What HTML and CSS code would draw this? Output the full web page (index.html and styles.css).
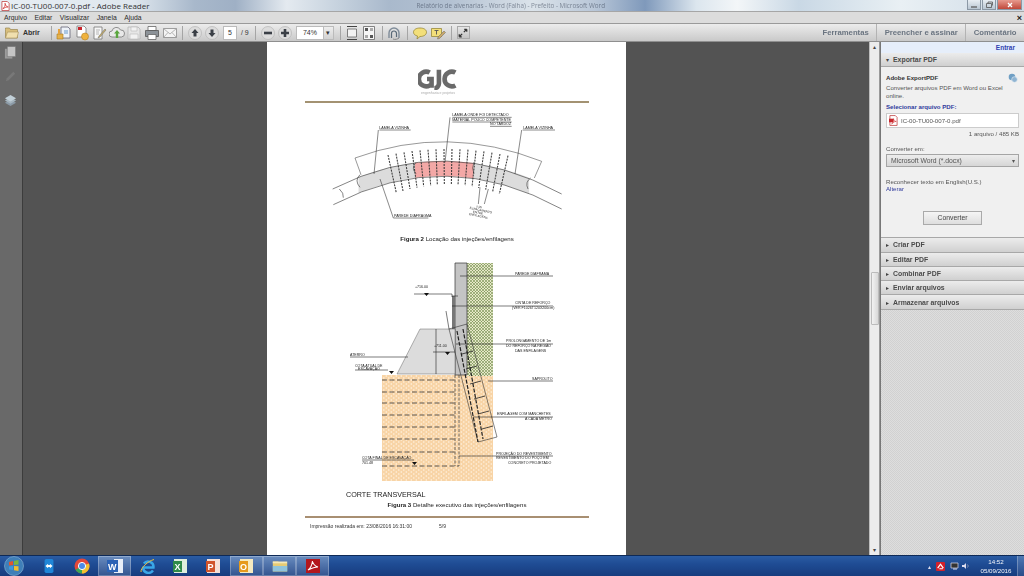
FILE: index.html
```html
<!DOCTYPE html>
<html lang="pt-BR">
<head>
<meta charset="utf-8">
<title>IC-00-TU00-007-0.pdf - Adobe Reader</title>
<link rel="stylesheet" href="styles.css">
</head>
<body>
<div class="app">
  <header class="titlebar">
    <svg class="ti" viewBox="0 0 10 10"><path d="M1 0h6l2 2v8H1z" fill="#fff" stroke="#b33" stroke-width=".8"/><path d="M2 8c2-1 3-4 2.500-6 .5 3 2 4 3.500 4-2 0-4 1-6 2z" fill="none" stroke="#c22" stroke-width=".8"/></svg>
    <span class="title-text">IC-00-TU00-007-0.pdf - Adobe Reader</span>
    <span class="ghost-title">Relatório de alvenarias - Word (Falha) - Prefeito - Microsoft Word</span>
    <div class="winctl">
      <span class="wbtn"><svg viewBox="0 0 10 8"><path d="M2 6h6" stroke="#555" stroke-width="1.200"/></svg></span>
      <span class="wbtn"><svg viewBox="0 0 10 8"><path d="M2.500 2.500h5v4h-5zM4 2.500V1h4.500v3.500" fill="none" stroke="#555" stroke-width=".8"/></svg></span>
      <span class="wbtn wclose"><svg viewBox="0 0 10 8"><path d="M3 2l4 4M7 2l-4 4" stroke="#fff" stroke-width="1.300"/></svg></span>
    </div>
  </header>
  <nav class="menubar">
    <span>Arquivo</span><span>Editar</span><span>Visualizar</span><span>Janela</span><span>Ajuda</span>
    <b class="menu-close">×</b>
  </nav>
  <div class="toolbar">
    <svg class="folder" viewBox="0 0 14 12"><path d="M.5 2.500V1h4l1 1.500h7v8.500H.5z" fill="#d9bf7c" stroke="#9a8650" stroke-width=".7"/><path d="M.5 11l2-6h11l-1.500 6z" fill="#f0dfae" stroke="#a8925c" stroke-width=".6"/></svg>
    <span class="open-label">Abrir</span>
    <i class="sep s11"></i>
    <div class="icons g-wide">
      <svg class="ic" viewBox="0 0 16 16"><path d="M5 2h7l2 2v9H5z" fill="#eef2f8" stroke="#667" stroke-width=".8"/><path d="M8 6h4M8 8h4" stroke="#69c"/><path d="M1 9h6v5H1z" fill="#e6b24c" stroke="#a87a20" stroke-width=".6"/><path d="M3 4v5" stroke="#e6a23c" stroke-width="2"/></svg>
      <svg class="ic" viewBox="0 0 16 16"><path d="M3 1h7l2 2v9H3z" fill="#fff" stroke="#777" stroke-width=".8"/><path d="M4 2h4v3H4z" fill="#c8262c"/><circle cx="11" cy="11.500" r="3.500" fill="#efb23e" stroke="#b58222" stroke-width=".6"/></svg>
      <svg class="ic" viewBox="0 0 16 16"><path d="M3 2h8v12H3z" fill="#f7f7f7" stroke="#777" stroke-width=".8"/><path d="M5 5h4M5 7h3M5 9h3" stroke="#999" stroke-width=".7"/><path d="M8 11l6-7 1 1-6 7-2 1z" fill="#c9b16b" stroke="#666" stroke-width=".5"/></svg>
      <svg class="ic" viewBox="0 0 16 16"><path d="M3 12a3 3 0 0 1 0-6 4.500 4.500 0 0 1 8.500-1 3.500 3.500 0 0 1 1 7z" fill="#e9e9e9" stroke="#777" stroke-width=".8"/><path d="M8 5l3 3.500H9.200V13H6.800V8.500H5z" fill="#5aa63e"/></svg>
      <svg class="ic" viewBox="0 0 16 16"><path d="M2 2h10l2 2v10H2z" fill="#e6e6e6" stroke="#b5b5b5" stroke-width=".8"/><path d="M5 2h6v4H5zM4 9h8v5H4z" fill="#f2f2f2" stroke="#bbb" stroke-width=".6"/></svg>
      <svg class="ic" viewBox="0 0 16 16"><path d="M4 1.500h8v4H4z" fill="#fff" stroke="#666" stroke-width=".8"/><path d="M1.500 5.500h13v6h-13z" fill="#8c9298" stroke="#555" stroke-width=".8"/><path d="M4 9.500h8v5H4z" fill="#fff" stroke="#666" stroke-width=".8"/></svg>
      <svg class="ic" viewBox="0 0 16 16"><path d="M1.500 3.500h13v9h-13z" fill="#f4f4f4" stroke="#8a8a8a" stroke-width=".8"/><path d="M1.500 3.500L8 9l6.500-5.500M1.500 12.500L6 7.500M14.500 12.500L10 7.500" fill="none" stroke="#9a9a9a" stroke-width=".7"/></svg>
    </div>
    <i class="sep s4"></i>
    <div class="icons g-tight ml4">
      <svg class="ic" viewBox="0 0 16 16"><circle cx="8" cy="8" r="6.500" fill="#dcdcdc" stroke="#b5b5b5" stroke-width=".7"/><path d="M8 4L11.500 8H9.500v3.500h-3V8H4.500z" fill="#3a3f46"/></svg>
      <svg class="ic" viewBox="0 0 16 16"><circle cx="8" cy="8" r="6.500" fill="#dcdcdc" stroke="#b5b5b5" stroke-width=".7"/><path d="M8 12L4.500 8h2V4.500h3V8h2z" fill="#3a3f46"/></svg>
    </div>
    <span class="pagebox">5</span>
    <span class="pagecount">/ 9</span>
    <i class="sep s4b"></i>
    <div class="icons g-tight ml4">
      <svg class="ic" viewBox="0 0 16 16"><circle cx="8" cy="8" r="6.500" fill="#dcdcdc" stroke="#b5b5b5" stroke-width=".7"/><path d="M4 6.700h8v2.600H4z" fill="#3a3f46"/></svg>
      <svg class="ic" viewBox="0 0 16 16"><circle cx="8" cy="8" r="6.500" fill="#dcdcdc" stroke="#b5b5b5" stroke-width=".7"/><path d="M6.700 4h2.600v2.700H12v2.600H9.300V12H6.700V9.300H4V6.700h2.700z" fill="#3a3f46"/></svg>
    </div>
    <div class="zoombox"><span class="zoomval">74%</span><span class="zoomdrop">▾</span></div>
    <i class="sep s6"></i>
    <div class="icons g-tight ml3">
      <svg class="ic" viewBox="0 0 16 16"><path d="M3 1.500h10M3 14.500h10" stroke="#444" stroke-width="1.200"/><path d="M3.500 4h9v8h-9z" fill="#f2f2f2" stroke="#666" stroke-width=".8"/></svg>
      <svg class="ic" viewBox="0 0 16 16"><path d="M2.500 1.500h11v13h-11z" fill="#f5f5f5" stroke="#666" stroke-width=".8"/><path d="M4 3h3v3H4zM9 10h3v3H9z" fill="#555"/><path d="M9 3h3v3H9zM4 10h3v3H4z" fill="#aaa"/></svg>
    </div>
    <i class="sep s5"></i>
    <div class="icons ml3">
      <svg class="ic" viewBox="0 0 16 16"><path d="M3 13V8a5 5 0 0 1 10 0v5" fill="none" stroke="#7f8c99" stroke-width="1.400"/><path d="M5.500 13V8.500a2.500 2.500 0 0 1 5 0V12" fill="none" stroke="#5a6a78" stroke-width="1.200"/><path d="M7 14c2 1 5 0 6-1" fill="none" stroke="#888"/></svg>
    </div>
    <i class="sep s5"></i>
    <div class="icons g-2 ml4">
      <svg class="ic" viewBox="0 0 16 16"><path d="M8 3c4 0 6.500 1.800 6.500 4.200S12 11.500 8 11.500l-3 2.500.5-3C3 10.500 1.500 9 1.500 7.200 1.500 4.800 4 3 8 3z" fill="#f3df7a" stroke="#98893a" stroke-width=".8"/></svg>
      <svg class="ic" viewBox="0 0 16 16"><path d="M1.500 3.500h10v8h-10z" fill="#f3df7a" stroke="#98893a" stroke-width=".8"/><path d="M4.500 5.500h4M6.500 5.500v4" stroke="#555" stroke-width=".9"/><path d="M8 12l6-6 1.500 1.500-6 6-2 .5z" fill="#c9a86b" stroke="#666" stroke-width=".5"/></svg>
    </div>
    <i class="sep s5"></i>
    <span class="expand"><svg viewBox="0 0 12 12"><path d="M7 5l3.500-3.500M10.500 1.500v3M10.500 1.500h-3M5 7l-3.500 3.500M1.500 10.500v-3M1.500 10.500h3" fill="none" stroke="#333" stroke-width="1.500"/></svg></span>
    <div class="tabs">
      <span class="tab">Ferramentas</span>
      <span class="tab">Preencher e assinar</span>
      <span class="tab">Comentário</span>
    </div>
  </div>

  <main class="main">
    <aside class="rail">
      <svg class="rail-ic" viewBox="0 0 14 14"><path d="M1 3h8v10.500H1z" fill="#9c9c9c"/><path d="M3.500 .5h9v11h-9z" fill="#c4c4c4" stroke="#6a6a6a" stroke-width=".6"/></svg>
      <svg class="rail-ic faint" viewBox="0 0 14 14"><path d="M2 12l1-3 7-7 2 2-7 7z" fill="#7f7f7f"/></svg>
      <svg class="rail-ic" viewBox="0 0 14 14"><path d="M7 6l6 3.500L7 13 1 9.500z" fill="#8b9aa6"/><path d="M7 3.500L13 7 7 10.500 1 7z" fill="#a6b5bf"/><path d="M7 1l6 3.500L7 8 1 4.500z" fill="#c2d0d8"/></svg>
    </aside>
    <section class="canvas">
      <article class="page">
        <div class="logo">
          <svg class="logo-mark" viewBox="0 0 42 24"><path d="M12 5a8 8 0 1 0 0 14h2v-7H9" fill="none" stroke="#6a6a6a" stroke-width="5"/><path d="M22 2v15a5 5 0 0 1-5 5" fill="none" stroke="#6a6a6a" stroke-width="5"/><path d="M40 5a8 8 0 1 0 0 14" fill="none" stroke="#6a6a6a" stroke-width="5"/></svg>
          <span class="logo-sub">engenharia e projetos</span>
        </div>
        <hr class="rule">
        <svg class="fig1" viewBox="0 145 900 345" aria-label="Figura 2">
          <defs>
            <clipPath id="cg"><rect x="175" y="250" width="170" height="200"/><rect x="520" y="250" width="168" height="200"/></clipPath>
            <clipPath id="cr"><rect x="345" y="250" width="175" height="200"/></clipPath>
          </defs>
          <path d="M99 408Q440 232 785 422" fill="none" stroke="#dcdcdc" stroke-width="45" clip-path="url(#cg)"/>
          <path d="M99 408Q440 232 785 422" fill="none" stroke="#f3a8a6" stroke-width="45" clip-path="url(#cr)"/>
          <g fill="none" stroke="#333" stroke-width="1.800">
            <path d="M98 385Q440 210 785 400M100 432Q440 255 785 445"/>
            <path d="M118 385q14 12 12 26M180 342q-18 18 0 38M348 305q-16 18 0 34M522 304q-8 18 0 36M692 352q-18 12-8 33"/>
            <path d="M165 292Q440 190 725 302M165 292l18 50M725 302l-22 50" stroke-width="1.500"/>
          </g>
          <g stroke="#3a3a3a" stroke-width="3.200" stroke-dasharray="6 3">
            <path d="M264 283L289 397M288 279L309 391M312 275L330 385M336 271L351 381M360 269L371 377M384 267L392 375M408 266L412 373M432 265L433 372M456 265L454 372M480 266L474 373M504 267L495 375M528 270L516 378M552 272L536 382M576 276L557 387M600 280L578 393M624 285L598 400"/>
          </g>
          <g fill="none" stroke="#222" stroke-width="1.600">
            <path d="M238 208H332M235 208L222 340M668 208H765M665 208L645 340M457 170H635M457 184H635M570 197H635M450 170L435 305M240 355L280 472H385M540 380L535 430M565 385L553 430"/>
          </g>
          <g class="fig-t1">
            <text x="238" y="204">LAMELA VIZINHA</text>
            <text x="670" y="204">LAMELA VIZINHA</text>
            <text x="457" y="167">LAMELA ONDE FOI DETECTADO</text>
            <text x="457" y="181">MATERIAL POUCO COMPETENTE</text>
            <text x="570" y="194">NO TARDOZ</text>
            <text x="282" y="469">PAREDE DIAFRAGMA</text>
            <g transform="rotate(12 530 440)" class="fig-small">
              <text x="528" y="440">2.00</text>
              <text x="510" y="449">ESPAÇAMENTO</text>
              <text x="522" y="458">ENTRE</text>
              <text x="512" y="467">ENFILAGENS</text>
            </g>
          </g>
        </svg>
        <p class="caption cap2"><b>Figura 2</b> Locação das injeções/enfilagens</p>
        <svg class="fig2" viewBox="340 262 230 228" aria-label="Figura 3">
          <defs>
            <pattern id="green" width="3" height="3" patternUnits="userSpaceOnUse"><rect width="3" height="3" fill="#e6e8c8"/><path d="M0 0l3 3M3 0L0 3" stroke="#6f8a4a" stroke-width=".6"/></pattern>
            <pattern id="orange" width="5" height="4" patternUnits="userSpaceOnUse"><rect width="5" height="4" fill="#f8d4a6"/><circle cx="1.300" cy="1" r=".8" fill="#fff3e2"/><circle cx="3.800" cy="3" r=".8" fill="#fff3e2"/></pattern>
          </defs>
          <rect x="382" y="376" width="111" height="106" fill="url(#orange)"/>
          <rect x="467" y="264" width="26" height="113" fill="url(#green)"/>
          <path d="M455 264h12v112h-12z" fill="#c4c4c4" stroke="#333" stroke-width=".7"/>
          <path d="M452 297h3v48h-3z" fill="#777"/>
          <path d="M420 330h35v45h-58z" fill="#dcdcdc" stroke="#444" stroke-width=".4"/>
          <path d="M449 330l18-5 30 113-19 5z" fill="none" stroke="#333" stroke-width=".6"/>
          <path d="M457 332l21 111M463 330l20 110" stroke="#222" stroke-width="1.200" stroke-dasharray="4 1.500"/>
          <path d="M462 355l11-3M466 370l11-3M470 385l11-3M474 400l11-3M478 415l11-3M482 430l11-3" stroke="#222" stroke-width=".8"/>
          <path d="M382 381H455M382 393H455M382 404H455M382 416H455M382 428H455M382 440H455M382 453H455M382 467H459" stroke="#333" stroke-width=".8" stroke-dasharray="5 2.500"/>
          <path d="M455 376V467M459 376V467" stroke="#333" stroke-width=".7" stroke-dasharray="3 1.500"/>
          <g fill="none" stroke="#222" stroke-width=".6">
            <path d="M460 277H553M452 307H553M456 345H553M488 382H553M473 418H553M459 457H553"/>
            <path d="M414 295H452V298M433 353H455M436 330V375M362 461H414M355 371H388M350 358H408"/>
            <path d="M452 297l6 0M449 330l-3-18"/>
          </g>
          <path d="M424 294l5 0-2.500 3zM445 353l5 0-2.500 3zM389 372l5 0-2.500 3zM412 463l5 0-2.500 3z" fill="#111"/>
          <g class="fig-t2">
            <text x="515" y="276">PAREDE DIAFRAMA</text>
            <text x="515" y="305">CINTA DE REFORÇO</text>
            <text x="512" y="310">(VER F1026T120X200cm)</text>
            <text x="506" y="343">PROLONGAMENTO DE 1m</text>
            <text x="506" y="348">DO REFORÇO NA REGIÃO</text>
            <text x="515" y="353">DAS ENFILAGENS</text>
            <text x="532" y="381">SAPROLITO</text>
            <text x="497" y="416">ENFILAGEM COM MANCHETES</text>
            <text x="525" y="421">A CADA METRO</text>
            <text x="496" y="456">PROJEÇÃO DO REVESTIMENTO</text>
            <text x="496" y="460">REVESTIMENTO DO POÇO EM</text>
            <text x="508" y="465">CONCRETO PROJETADO</text>
            <text x="362" y="460">COTA FINAL DE ESCAVAÇÃO</text>
            <text x="362" y="465">701.48</text>
            <text x="355" y="368">COTA ATUAL DE</text>
            <text x="358" y="371">ESCAVAÇÃO</text>
            <text x="350" y="357">ATERRO</text>
            <text x="415" y="289">+716.00</text>
            <text x="434" y="348">+711.00</text>
          </g>
        </svg>
        <p class="section-title">CORTE TRANSVERSAL</p>
        <p class="caption cap3"><b>Figura 3</b> Detalhe executivo das injeções/enfilagens</p>
        <hr class="rule rule-b">
        <div class="footer-line"><span>Impressão realizada em: 23/08/2016 16:31:00</span><span class="pg">5/9</span></div>
      </article>
    </section>
    <div class="scrollbar">
      <span class="sb-arrow">▴</span>
      <span class="sb-thumb"></span>
      <span class="sb-arrow sb-down">▾</span>
    </div>
    <aside class="panel">
      <div class="login">Entrar</div>
      <div class="acc open">▾<span>Exportar PDF</span></div>
      <div class="export">
        <div class="ex-head"><b>Adobe ExportPDF</b>
          <svg class="cloud" viewBox="0 0 10 10"><circle cx="4" cy="4" r="3.300" fill="#6f9fc4"/><circle cx="6.500" cy="6.500" r="2.800" fill="#8fb4d2" stroke="#e8eef3" stroke-width=".6"/></svg>
        </div>
        <p class="ex-desc">Converter arquivos PDF em Word ou Excel online.</p>
        <p class="ex-link">Selecionar arquivo PDF:</p>
        <div class="filebox">
          <svg class="fi" viewBox="0 0 10 12"><path d="M1 .5h6l2 2v9H1z" fill="#fff" stroke="#b33" stroke-width=".8"/><path d="M0 4h5v4H0z" fill="#c7272d"/><path d="M3 10c1-2 2-4 2-6 .5 2 1 3 3 3-2 0-3 1-5 3z" fill="none" stroke="#c22" stroke-width=".6"/></svg>
          <span>IC-00-TU00-007-0.pdf</span>
        </div>
        <p class="ex-size">1 arquivo / 485 KB</p>
        <p class="ex-label">Converter em:</p>
        <div class="selectbox"><span>Microsoft Word (*.docx)</span><i>▾</i></div>
        <p class="ex-ocr">Reconhecer texto em English(U.S.)</p>
        <p class="ex-alt">Alterar</p>
        <span class="convert">Converter</span>
      </div>
      <div class="acc">▸<span>Criar PDF</span></div>
      <div class="acc">▸<span>Editar PDF</span></div>
      <div class="acc">▸<span>Combinar PDF</span></div>
      <div class="acc">▸<span>Enviar arquivos</span></div>
      <div class="acc">▸<span>Armazenar arquivos</span></div>
      <div class="panel-fill"></div>
    </aside>
  </main>

  <footer class="taskbar">
    <span class="orb"><svg viewBox="0 0 20 20"><circle cx="10" cy="10" r="9.500" fill="#3f7fb8" stroke="#8fb8d8" stroke-width=".6"/><path d="M5 6l4-1v4l-4 .5z" fill="#e2552c"/><path d="M10 5l4.500-1v4.500L10 9z" fill="#7db63c"/><path d="M5 10.500l4-.5v4l-4-.6z" fill="#3c9ade"/><path d="M10 10l4.500.2V15l-4.500-.8z" fill="#efbd2e"/></svg></span>
    <span class="tk"><svg viewBox="0 0 16 18"><rect x="3" y="1" width="10" height="16" rx="2" fill="#1f86d8"/><path d="M4 9l3-2.500V8h2V6.500L12 9l-3 2.500V10H7v1.500z" fill="#fff"/></svg></span>
    <span class="tk"><svg viewBox="0 0 16 16"><circle cx="8" cy="8" r="7.500" fill="#e2483a"/><path d="M8 8L1.500 11.800A7.500 7.500 0 0 0 8 15.500z" fill="#3aa655"/><path d="M8 8v7.500a7.500 7.500 0 0 0 7-10z" fill="#f2c230"/><circle cx="8" cy="8" r="3.600" fill="#4b8be8" stroke="#fff" stroke-width="1"/></svg></span>
    <span class="tk act"><svg viewBox="0 0 18 16"><path d="M8 1h9v14H8z" fill="#e8eef8"/><path d="M1 2h11v12H1z" fill="#2b62b5"/><text x="2" y="12" class="tk-letter">W</text></svg></span>
    <span class="tk"><svg viewBox="0 0 16 16"><path d="M2.500 9.500h11A5.500 5.500 0 0 0 3.800 5.500M3 10a5.500 5.500 0 0 0 10 2.500" fill="none" stroke="#39a7e8" stroke-width="2.400"/><path d="M1 14c-.5-4 7-11 13-12.500" fill="none" stroke="#f0c23c" stroke-width="1"/></svg></span>
    <span class="tk"><svg viewBox="0 0 18 16"><path d="M2 1h13v14H2z" fill="#dfeedd"/><path d="M1 3h9v11H1z" fill="#2f8a4a"/><text x="2.500" y="12" class="tk-letter">X</text></svg></span>
    <span class="tk"><svg viewBox="0 0 18 16"><path d="M2 1h13v14H2z" fill="#f5e0d8"/><path d="M1 3h9v11H1z" fill="#d0542c"/><text x="2.500" y="12" class="tk-letter">P</text></svg></span>
    <span class="tk act"><svg viewBox="0 0 18 16"><path d="M2 1h13v14H2z" fill="#f6eac0"/><path d="M1 3h9v11H1z" fill="#e69a1c"/><text x="2" y="12" class="tk-letter">O</text></svg></span>
    <span class="tk act"><svg viewBox="0 0 20 16"><path d="M2 3h6l1 1.500h9V14H2z" fill="#e6cb74"/><path d="M2 8h16v6H2z" fill="#8fc4dc"/><path d="M2 3h16v2H2z" fill="#f4e9b8"/></svg></span>
    <span class="tk act"><svg viewBox="0 0 16 16"><path d="M1 1h14v14H1z" fill="#b3161c"/><path d="M3 12c3-2 4-5 4.500-9 .5 3 2 5 5.500 6-3 0-6 1-10 3z" fill="none" stroke="#fff" stroke-width="1.100"/></svg></span>
    <div class="tray">
      <i class="tray-up">▴</i>
      <span class="tray-red"><svg viewBox="0 0 8 8"><path d="M1.500 5.500L4 2l2.500 3.500M3 6h3" fill="none" stroke="#fff" stroke-width="1.100"/></svg></span>
      <svg class="tray-ic" viewBox="0 0 10 8"><path d="M1 1h7v5H1z" fill="#333" stroke="#dde" stroke-width=".7"/><path d="M3 7h4" stroke="#dde"/></svg>
      <svg class="tray-ic" viewBox="0 0 10 8"><path d="M1 3h2l2-2v6L3 5H1z" fill="#dde"/><path d="M6.500 2.500q1.500 1.500 0 3" fill="none" stroke="#aab" stroke-width=".7"/></svg>
      <div class="clock"><span>14:52</span><span>05/09/2016</span></div>
      <span class="desk"></span>
    </div>
  </footer>
</div>
</body>
</html>
```

FILE: styles.css
```css
* { box-sizing: border-box; }
html, body { margin: 0; padding: 0; }
body { width: 1024px; height: 576px; overflow: hidden; font-family: "Liberation Sans", sans-serif; background: #535353; }
p { margin: 0; }
svg { display: block; flex: none; }
.app { width: 1024px; height: 576px; display: flex; flex-direction: column; overflow: hidden; filter: blur(.3px); }

.titlebar { height: 11px; display: flex; align-items: center; padding-left: 1px; font-size: 8px; color: #333;
  background: linear-gradient(90deg, #e6edf3 0, #dfe7ee 13%, #a8b8cb 19%, #9fb0c5 23%, #e4eaf0 28%, #c6d2de 33%, #a9b9cc 38%, #b3c1d2 44%, #dbe3ea 52%, #b9c7d8 58%, #7f99bb 63%, #dce6ee 68%, #f3f6f8 72%, #c9d8e5 78%, #e9f0f4 88%, #cfdbe6 100%); }
.ti { width: 9px; height: 10px; }
.title-text { margin-left: 1px; font-family: "Open Sans", sans-serif; white-space: nowrap; }
.ghost-title { margin-left: 267px; font-family: "Open Sans", sans-serif; white-space: nowrap; font-size: 6.300px; color: rgba(40, 50, 70, .5); filter: blur(.6px); }
.winctl { margin-left: auto; margin-right: 2px; display: flex; height: 11px; gap: 1px; }
.wbtn { width: 14px; height: 10px; display: flex; align-items: center; justify-content: center; background: linear-gradient(#e8eef3, #b9c6d2); border: 1px solid #8b98a5; border-top: 0; }
.wbtn svg { width: 10px; height: 8px; }
.wclose { width: 25px; background: linear-gradient(#e79a8e, #c0483a); }

.menubar { height: 12px; background: #dcdcdc; border-top: 1px solid #a6a6a6; display: flex; align-items: center; padding-left: 4px; gap: 7.500px; font-size: 6.800px; color: #2c2c2c; }
.menu-close { margin-left: auto; margin-right: 2px; font-size: 9px; color: #222; line-height: 8px; }

.toolbar { height: 19px; display: flex; align-items: center; padding-left: 5px; background: linear-gradient(#ececec, #c9c9c9); border-top: 1px solid #9a9a9a; border-bottom: 1px solid #8f8f8f; }
.folder { width: 14px; height: 12px; }
.open-label { margin-left: 4px; width: 18px; font-size: 7px; font-weight: 700; color: #333; }
.sep { width: 1px; height: 14px; background: #a5a5a5; flex: none; }
.s11 { margin-left: 10px; margin-right: 4px; }
.s4 { margin-left: 4.400px; }
.s4b { margin-left: 4px; }
.s6 { margin-left: 6px; }
.s5 { margin-left: 5px; }
.icons { display: flex; }
.g-wide { gap: 1.600px; }
.g-tight { gap: 1px; }
.g-2 { gap: 2px; }
.ml4 { margin-left: 4px; }
.ml3 { margin-left: 3px; }
.ic { width: 16px; height: 16px; }
.pagebox { margin-left: 3px; width: 14px; height: 14px; background: #fff; border: 1px solid #bbb; font-size: 7px; text-align: center; line-height: 12px; color: #333; }
.pagecount { margin-left: 4px; width: 10px; font-size: 7px; color: #333; white-space: nowrap; }
.zoombox { margin-left: 3px; width: 38px; height: 14px; display: flex; background: #fff; border: 1px solid #bbb; font-size: 7px; line-height: 12px; color: #333; }
.zoomval { width: 26px; text-align: center; }
.zoomdrop { flex: 1; text-align: center; background: linear-gradient(#eee, #d2d2d2); border-left: 1px solid #bbb; font-size: 7px; }
.expand { margin-left: 5px; width: 13px; height: 13px; display: flex; align-items: center; justify-content: center; background: linear-gradient(#e6e6e6, #c4c4c4); border: 1px solid #aaa; }
.expand svg { width: 10px; height: 10px; }
.tabs { margin-left: auto; display: flex; align-self: stretch; }
.tab { display: flex; align-items: center; padding: 0 7.500px; border-left: 1px solid #b3b3b3; font-size: 7.700px; font-weight: 700; color: #6a7480; white-space: nowrap; }
.tab:first-child { border-left: 0; }

.main { flex: 1; display: flex; min-height: 0; }
.rail { width: 23px; background: #696969; border-right: 1px solid #3c3c3c; display: flex; flex-direction: column; align-items: center; gap: 11px; padding: 4px 2px 0 0; }
.rail-ic { width: 13px; height: 13px; }
.faint { opacity: .7; }
.canvas { width: 846px; background: #535353; display: flex; justify-content: center; padding-left: 1px; overflow: hidden; }
.page { width: 359px; height: 513px; background: #fff; display: flex; flex-direction: column; overflow: hidden; flex: none; }
.logo { display: flex; flex-direction: column; align-items: center; margin-top: 26px; padding-right: 17px; }
.logo-mark { width: 40px; height: 22px; }
.logo-sub { font-size: 3.500px; color: #aaa; line-height: 4px; margin-top: 1px; }
.rule { margin: 6px 37px 0 38px; border: 0; height: 1.500px; background: #a39272; flex: none; }
.fig1 { width: 300px; height: 115px; margin: 6px 0 0 33px; }
.fig-t1 text { font: 11px "Liberation Sans", sans-serif; fill: #222; }
.fig-t1 .fig-small text { font-size: 9px; }
.fig-t2 text { font: 3.600px "Liberation Sans", sans-serif; fill: #222; }
.caption { font: 6.100px/8px "Liberation Sans", sans-serif; color: #222; text-align: center; padding-left: 21px; }
.cap2 { margin-top: 11px; }
.fig2 { width: 230px; height: 228px; margin: 18px 0 0 73px; }
.section-title { font: 7.200px/10px "Liberation Sans", sans-serif; color: #222; margin: 1px 0 0 79px; }
.cap3 { margin-top: 1px; }
.rule-b { margin-top: 7px; height: 2px; background: #a88f72; }
.footer-line { margin: 5px 0 0 43px; display: flex; font: 5px/7px "Liberation Sans", sans-serif; color: #333; }
.pg { margin-left: 27px; }

.scrollbar { width: 11px; background: #ececec; border-left: 1px solid #bdbdbd; border-right: 1px solid #9a9a9a; display: flex; flex-direction: column; align-items: center; }
.sb-arrow { font-size: 6px; color: #444; line-height: 8px; margin-top: 1px; }
.sb-thumb { width: 8px; height: 53px; margin-top: 221px; background: linear-gradient(90deg, #f2f2f2, #d8d8d8); border: 1px solid #bbb; border-radius: 1px; }
.sb-down { margin-top: auto; margin-bottom: 1px; }

.panel { width: 144px; display: flex; flex-direction: column; background: #f0f0f0; border-left: 1px solid #777; }
.login { height: 11px; background: #e6eefa; color: #2f3fb0; font-size: 6.500px; line-height: 11px; text-align: right; padding-right: 9px; font-weight: 700; }
.acc { height: 14.300px; flex: none; display: flex; align-items: center; padding-left: 5px; gap: 4px; font-size: 6px; color: #444; background: linear-gradient(#ececec, #d0d0d0); border-bottom: 1px solid #a8a8a8; }
.acc span { font-size: 6.900px; font-weight: 700; color: #4a4a4a; }
.export { height: 171px; flex: none; padding: 6px 5px 0; display: flex; flex-direction: column; font-size: 6.100px; line-height: 8px; color: #444; border-bottom: 1px solid #a8a8a8; }
.ex-head { display: flex; justify-content: space-between; align-items: center; padding-right: 1px; height: 10px; color: #333; }
.cloud { width: 10px; height: 10px; }
.ex-desc { margin-top: 1px; padding-right: 8px; color: #555; }
.ex-link { margin-top: 3px; color: #2f3a9c; font-weight: 700; }
.filebox { margin-top: 2px; height: 15px; width: 133px; background: #fff; border: 1px solid #ccc; display: flex; align-items: center; gap: 3px; padding-left: 2px; color: #555; }
.fi { width: 9px; height: 11px; }
.ex-size { margin-top: 2px; width: 133px; text-align: right; color: #555; }
.ex-label { margin-top: 7px; color: #555; }
.selectbox { margin-top: 1px; height: 13px; width: 133px; display: flex; justify-content: space-between; align-items: center; padding: 0 3px 0 4px; background: linear-gradient(#ededed, #d6d6d6); border: 1px solid #a5a5a5; color: #555; font-size: 6.800px; }
.selectbox i { font-style: normal; font-size: 6px; }
.ex-ocr { margin-top: 11px; color: #555; }
.ex-alt { color: #2f3a9c; line-height: 6px; }
.convert { margin: 19px 0 0 37px; width: 59px; height: 14px; display: flex; align-items: center; justify-content: center; font-size: 6.800px; color: #444; background: linear-gradient(#f5f5f5, #dedede); border: 1px solid #aaa; }
.panel-fill { flex: 1; background: repeating-conic-gradient(#d1d1d1 0 25%, #dedede 0 50%) 0 0 / 2px 2px; }

.taskbar { height: 21px; display: flex; align-items: center; background: linear-gradient(#2b5ca3 0, #1f4c94 40%, #173c7e 100%); border-top: 1px solid #0e2a57; }
.orb { width: 20px; height: 20px; margin: 0 8px 0 4px; }
.orb svg { width: 20px; height: 20px; }
.tk { width: 33px; height: 20px; display: flex; align-items: center; justify-content: center; flex: none; }
.tk svg { width: 18px; height: 16px; }
.tk.act { background: linear-gradient(rgba(255,255,255,.3), rgba(255,255,255,.12)); box-shadow: inset 0 0 0 1px rgba(255,255,255,.25); }
.tk-letter { font: 700 9px "Liberation Sans", sans-serif; fill: #fff; }
.tray { margin-left: auto; display: flex; align-items: center; align-self: stretch; }
.tray-up { font-style: normal; font-size: 6px; color: #dde; margin-right: 5px; }
.tray-red { width: 9px; height: 9px; background: #d3202a; border-radius: 1px; margin-right: 5px; }
.tray-red svg { width: 9px; height: 9px; }
.tray-ic { width: 10px; height: 8px; margin-right: 1px; }
.clock { margin-left: 3px; width: 42px; display: flex; flex-direction: column; align-items: center; font-size: 6.200px; line-height: 9px; color: #f2f5fa; }
.desk { width: 7px; height: 20px; background: linear-gradient(rgba(255,255,255,.18), rgba(255,255,255,.08)); border-left: 1px solid rgba(255,255,255,.25); }
```
